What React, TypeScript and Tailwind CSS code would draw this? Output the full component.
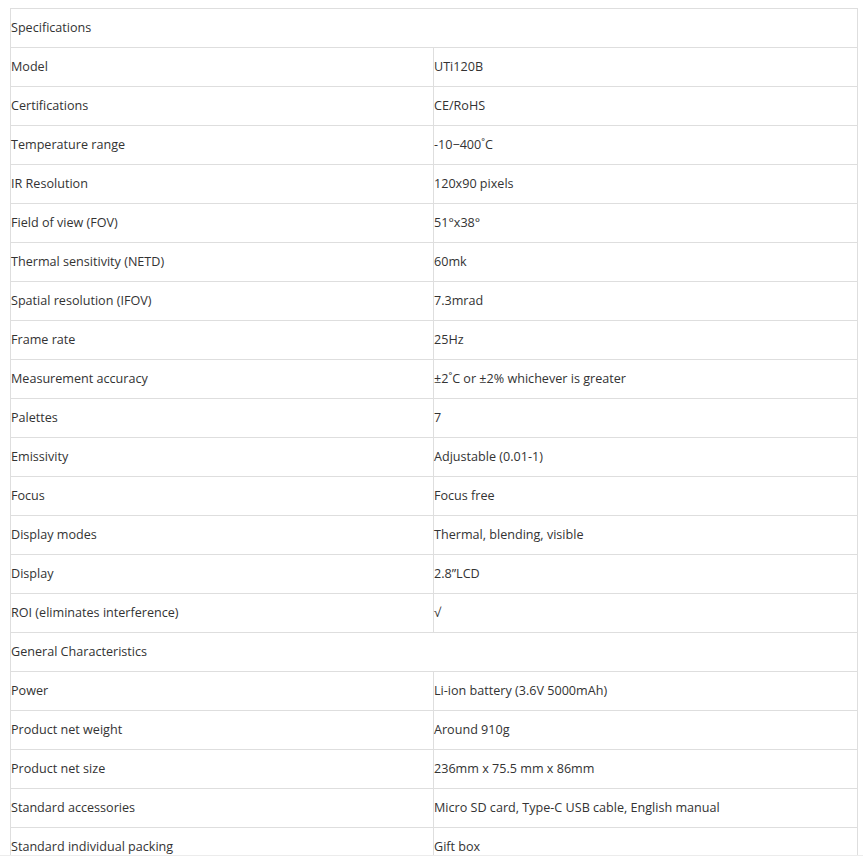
const rows: [string, string | null][] = [
  ["Specifications", null],
  ["Model", "UTi120B"],
  ["Certifications", "CE/RoHS"],
  ["Temperature range", "-10\u2212400\u02daC"],
  ["IR Resolution", "120x90 pixels"],
  ["Field of view (FOV)", "51\u00b0x38\u00b0"],
  ["Thermal sensitivity (NETD)", "60mk"],
  ["Spatial resolution (IFOV)", "7.3mrad"],
  ["Frame rate", "25Hz"],
  ["Measurement accuracy", "\u00b12\u02daC or \u00b12% whichever is greater"],
  ["Palettes", "7"],
  ["Emissivity", "Adjustable (0.01-1)"],
  ["Focus", "Focus free"],
  ["Display modes", "Thermal, blending, visible"],
  ["Display", "2.8\u201dLCD"],
  ["ROI (eliminates interference)", "\u221a"],
  ["General Characteristics", null],
  ["Power", "Li-ion battery (3.6V 5000mAh)"],
  ["Product net weight", "Around 910g"],
  ["Product net size", "236mm x 75.5 mm x 86mm"],
  ["Standard accessories", "Micro SD card, Type-C USB cable, English manual"],
  ["Standard individual packing", "Gift box"],
];

export default function App() {
  return (
    <div className="bg-white h-[856px] overflow-hidden border-b border-[#ececec] pt-[8px] pl-[10px] font-['Open_Sans',sans-serif] text-[12.6px] text-[#333]">
      <table className="w-[848px] border-collapse table-fixed">
        <colgroup>
          <col className="w-[423px]" />
          <col />
        </colgroup>
        <tbody>
          {rows.map(([label, value]) => (
            <tr key={label} className="h-[39px]">
              {value === null ? (
                <td colSpan={2} className="border border-[#dedede] px-0 align-middle">
                  {label}
                </td>
              ) : (
                <>
                  <td className="border border-[#dedede] px-0 align-middle">{label}</td>
                  <td className="border border-[#dedede] px-0 align-middle">{value}</td>
                </>
              )}
            </tr>
          ))}
        </tbody>
      </table>
    </div>
  );
}
